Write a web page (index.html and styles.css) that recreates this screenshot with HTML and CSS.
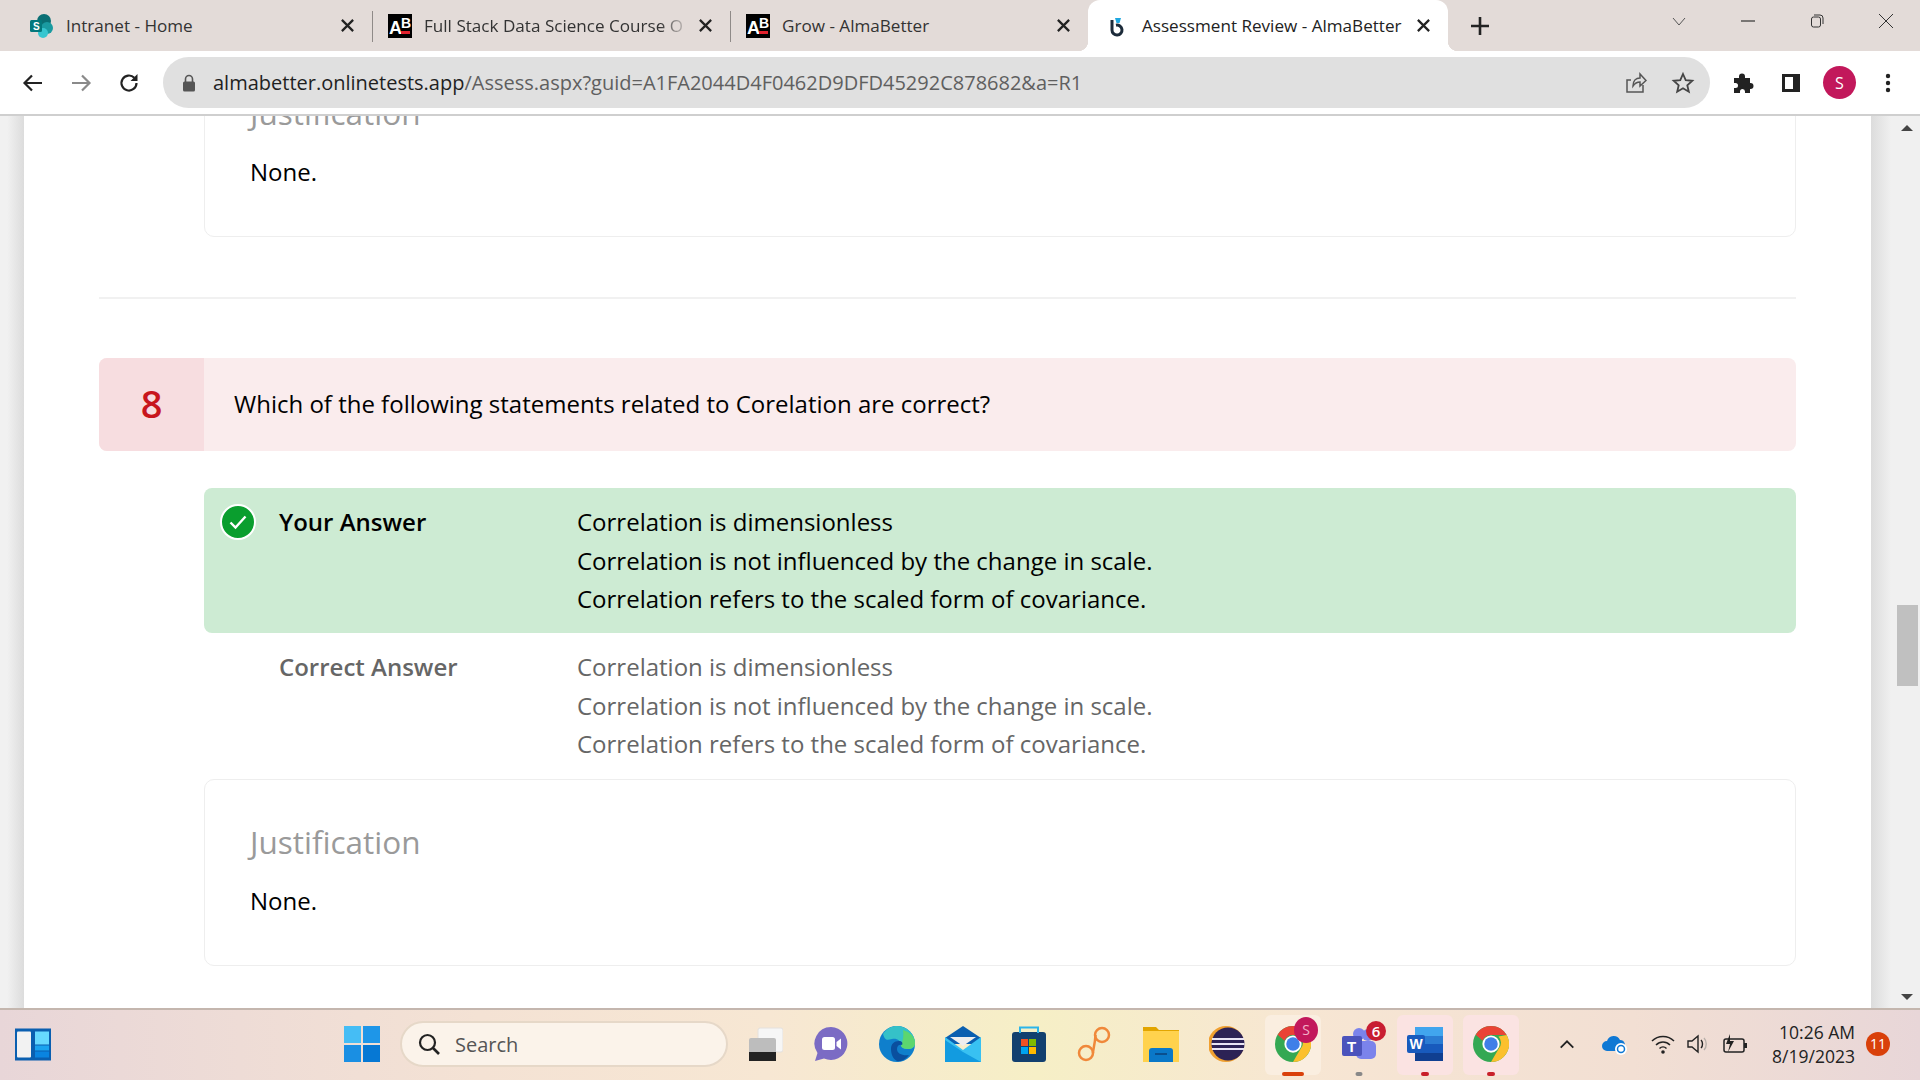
FILE: index.html
```html
<!DOCTYPE html>
<html lang="en">
<head>
    <meta charset="UTF-8">
    <meta name="viewport" content="width=device-width, initial-scale=1.0">
    <title>Assessment Review - AlmaBetter</title>
    <link rel="stylesheet" href="styles.css">
</head>
<body>
    <svg class="defs" width="0" height="0">
        <symbol id="tab-x" viewBox="0 0 16 16">
            <path d="M2 2l12 12M14 2L2 14" stroke="#222" stroke-width="2.400" fill="none"/>
        </symbol>
        <symbol id="chrome" viewBox="0 0 48 48">
            <circle cx="24" cy="24" r="24" fill="#34a853"/>
            <path d="M24 0a24 24 0 0 1 20.8 12H24a12 12 0 0 0-11.2 7.6L3.6 11.6A24 24 0 0 1 24 0z" fill="#ea4335"/>
            <path d="M44.8 12A24 24 0 0 1 24 48l10.4-18A12 12 0 0 0 34 14z" fill="#fbc02d"/>
            <circle cx="24" cy="24" r="11.5" fill="#fff"/>
            <circle cx="24" cy="24" r="9" fill="#3f7fe8"/>
        </symbol>
    </svg>

    <div class="tabstrip">
        <div class="tab">
            <svg class="tab-icon" viewBox="0 0 24 24">
                <circle cx="14" cy="7" r="7" fill="#0a6f74"/>
                <circle cx="17" cy="14" r="6" fill="#1a9ba1"/>
                <circle cx="13" cy="19" r="5" fill="#37c6d0"/>
                <rect x="0" y="6" width="12" height="12" rx="1.5" fill="#03787c"/>
                <text x="3" y="16" font-family="Liberation Sans" font-weight="700" font-size="10" fill="#fff">S</text>
            </svg>
            <span class="tab-title">Intranet - Home</span>
            <svg class="tab-close"><use href="#tab-x"/></svg>
        </div>
        <div class="tab sep">
            <svg class="tab-icon" viewBox="0 0 24 24">
                <rect width="24" height="24" fill="#000"/>
                <text x="1" y="20" font-family="Liberation Sans" font-weight="700" font-size="18" fill="#fff">A</text>
                <text x="13" y="14" font-family="Liberation Sans" font-weight="700" font-size="14" fill="#fff">B</text>
                <rect x="13" y="17" width="9" height="3" fill="#e2222e"/>
            </svg>
            <span class="tab-title fade">Full Stack Data Science Course O</span>
            <svg class="tab-close"><use href="#tab-x"/></svg>
        </div>
        <div class="tab sep">
            <svg class="tab-icon" viewBox="0 0 24 24">
                <rect width="24" height="24" fill="#000"/>
                <text x="1" y="20" font-family="Liberation Sans" font-weight="700" font-size="18" fill="#fff">A</text>
                <text x="13" y="14" font-family="Liberation Sans" font-weight="700" font-size="14" fill="#fff">B</text>
                <rect x="13" y="17" width="9" height="3" fill="#e2222e"/>
            </svg>
            <span class="tab-title">Grow - AlmaBetter</span>
            <svg class="tab-close"><use href="#tab-x"/></svg>
        </div>
        <div class="tab active">
            <svg class="tab-icon" viewBox="0 0 24 24">
                <path d="M8 6v10a5 5 0 1 0 4-4.800" fill="none" stroke="#1c2b3a" stroke-width="3"/>
                <path d="M11 4h6l-1.500 5h-3z" fill="#1ea7e0"/>
            </svg>
            <span class="tab-title">Assessment Review - AlmaBetter</span>
            <svg class="tab-close"><use href="#tab-x"/></svg>
        </div>
        <svg class="new-tab" viewBox="0 0 20 20"><path d="M10 1v18M1 10h18" stroke="#222" stroke-width="2.600"/></svg>
        <div class="win-controls">
            <svg class="win-btn" viewBox="0 0 16 16"><path d="M2 5l6 7 6-7" fill="none" stroke="#555" stroke-width="1"/></svg>
            <svg class="win-btn" viewBox="0 0 16 16"><path d="M1 8h14" stroke="#333" stroke-width="1.200"/></svg>
            <svg class="win-btn" viewBox="0 0 16 16"><rect x="2.500" y="4" width="9" height="10" rx="2" fill="none" stroke="#333"/><path d="M5 2h6a3 3 0 0 1 3 3v6" fill="none" stroke="#333"/></svg>
            <svg class="win-btn" viewBox="0 0 16 16"><path d="M1 1l14 14M15 1L1 15" stroke="#333" stroke-width="1"/></svg>
        </div>
    </div>

    <div class="toolbar">
        <svg class="nav-btn" viewBox="0 0 24 24"><path d="M21 12H4M11 4.500L3.500 12l7.500 7.500" fill="none" stroke="#222" stroke-width="2.200"/></svg>
        <svg class="nav-btn" viewBox="0 0 24 24"><path d="M3 12h17M13 4.500l7.500 7.500-7.500 7.500" fill="none" stroke="#8a8a8a" stroke-width="2.200"/></svg>
        <svg class="nav-btn" viewBox="0 0 24 24"><path d="M19.500 12a7.500 7.500 0 1 1-2.200-5.300" fill="none" stroke="#222" stroke-width="2.200"/><path d="M20.500 3v7h-7z" fill="#222"/></svg>
        <div class="omnibox">
            <svg class="lock" viewBox="0 0 14 18"><path d="M3.500 8V5a3.500 3.500 0 0 1 7 0v3" fill="none" stroke="#555" stroke-width="1.600"/><rect x="1" y="7.500" width="12" height="10" rx="1.500" fill="#555"/></svg>
            <span class="url"><span class="host">almabetter.onlinetests.app</span>/Assess.aspx?guid=A1FA2044D4F0462D9DFD45292C878682&amp;a=R1</span>
            <svg class="omni-icon" viewBox="0 0 24 24"><path d="M20 14v7H4V9h4M10 15c0-5 3-8 7-8V3l6 6.500L17 15v-4c-3 0-5 1-7 4z" fill="none" stroke="#555" stroke-width="1.500"/></svg>
            <svg class="omni-icon" viewBox="0 0 24 24"><path d="M12 3l2.700 6.100 6.600.7-5 4.400 1.500 6.500L12 17.300l-5.800 3.400 1.500-6.500-5-4.400 6.600-.7z" fill="none" stroke="#444" stroke-width="1.800"/></svg>
        </div>
        <svg class="tool-icon" viewBox="0 0 24 24"><path d="M3 7h5V5.500a3 3 0 0 1 6 0V7h5v5h.5a3 3 0 0 1 0 6H19v4h-5v-1.500a2.500 2.500 0 0 0-5 0V22H3v-5h1.500a2.500 2.500 0 0 0 0-5H3z" fill="#222"/></svg>
        <svg class="tool-icon" viewBox="0 0 24 24"><rect x="3" y="3" width="18" height="18" fill="#222"/><rect x="6" y="6" width="8" height="12" fill="#fff"/></svg>
        <div class="avatar">S</div>
        <svg class="tool-icon" viewBox="0 0 24 24"><circle cx="12" cy="5" r="2.200" fill="#222"/><circle cx="12" cy="12" r="2.200" fill="#222"/><circle cx="12" cy="19" r="2.200" fill="#222"/></svg>
    </div>

    <div class="viewport">
        <div class="gutter-left"></div>
        <main class="content">
            <div class="justification scrolled">
                <h3>Justification</h3>
                <p>None.</p>
            </div>
            <hr class="divider">

            <div class="question">
                <div class="q-num">8</div>
                <div class="q-text">Which of the following statements related to Corelation are correct?</div>
            </div>

            <div class="answer yours">
                <div class="answer-icon">
                    <svg viewBox="0 0 36 36" width="36" height="36">
                        <circle cx="18" cy="18" r="17" fill="#0a9e2e" stroke="#fff" stroke-width="2"/>
                        <path d="M10.500 18.500l5 5 10-11" fill="none" stroke="#fff" stroke-width="2.400"/>
                    </svg>
                </div>
                <div class="answer-label">Your Answer</div>
                <div class="answer-values">
                    <div>Correlation is dimensionless</div>
                    <div>Correlation is not influenced by the change in scale.</div>
                    <div>Correlation refers to the scaled form of covariance.</div>
                </div>
            </div>

            <div class="answer correct">
                <div class="answer-icon"></div>
                <div class="answer-label">Correct Answer</div>
                <div class="answer-values">
                    <div>Correlation is dimensionless</div>
                    <div>Correlation is not influenced by the change in scale.</div>
                    <div>Correlation refers to the scaled form of covariance.</div>
                </div>
            </div>

            <div class="justification">
                <h3>Justification</h3>
                <p>None.</p>
            </div>
        </main>
        <div class="scrollbar">
            <div class="arrow up"></div>
            <div class="thumb"></div>
            <div class="arrow down"></div>
        </div>
    </div>

    <div class="taskbar">
        <svg class="widgets" viewBox="0 0 36 32">
            <rect width="36" height="32" fill="#0a5fb0"/>
            <rect x="2" y="3" width="14" height="26" rx="1" fill="#f2f2f2"/>
            <rect x="20" y="3" width="14" height="13" fill="#66d9ff"/>
            <rect x="20" y="17" width="14" height="5" fill="#1aa3f0"/>
            <rect x="20" y="23" width="14" height="6" fill="#0a84e0"/>
        </svg>

        <div class="task-item start">
            <svg class="app" viewBox="0 0 36 36">
                <rect x="0" y="0" width="17" height="17" fill="#45bdf5"/>
                <rect x="19" y="0" width="17" height="17" fill="#1e96e8"/>
                <rect x="0" y="19" width="17" height="17" fill="#1a8fe3"/>
                <rect x="19" y="19" width="17" height="17" fill="#0678d4"/>
            </svg>
        </div>

        <div class="search">
            <svg class="search-icon" viewBox="0 0 24 24"><circle cx="10.500" cy="10.500" r="7.500" fill="none" stroke="#222" stroke-width="2.200"/><path d="M16 16l6 6" stroke="#222" stroke-width="2.600"/></svg>
            <span>Search</span>
        </div>

        <div class="task-item">
            <svg class="app" viewBox="0 0 36 36">
                <rect x="11" y="2" width="25" height="24" rx="2" fill="#f6f6f6" stroke="#e4e0dc"/>
                <rect x="2" y="12" width="27" height="23" rx="2" fill="#bdbdbd"/>
                <rect x="2" y="26" width="27" height="9" fill="#222"/>
            </svg>
        </div>
        <div class="task-item">
            <svg class="app" viewBox="0 0 36 36">
                <path d="M18 1a16.500 16.500 0 1 1-7 31.500L2 35l2.500-8A16.500 16.500 0 0 1 18 1z" fill="#7b6bc4"/>
                <rect x="9" y="11" width="13" height="13" rx="2.500" fill="#fff"/>
                <path d="M23.500 16l4.500-3.500v11L23.500 20z" fill="#fff"/>
            </svg>
        </div>
        <div class="task-item">
            <svg class="app" viewBox="0 0 36 36">
                <circle cx="18" cy="18" r="18" fill="#0f7fcc"/>
                <path d="M4 8C8 2 13 0 18 0c10 0 18 8 18 17 0 4-3 6-7 6-5 0-7-2-7-4 0-4-4-7-9-6s-7 2-9-5z" fill="#35c1c8"/>
                <path d="M24 4c7 2 12 7 12 13 0 4-3 6-7 6-4 0-6-1-7-3 2-6 3-11 2-16z" fill="#5cd66e"/>
                <path d="M12 23c0-5 3-8 8-8 3 0 4 2 3 4-2-1-5 0-5 4 0 5 6 7 12 6-3 4-8 7-12 6-4-2-6-7-6-12z" fill="#0a4f9e"/>
            </svg>
        </div>
        <div class="task-item">
            <svg class="app" viewBox="0 0 36 36">
                <path d="M0 12L18 0l18 12v6H0z" fill="#0a5fb0"/>
                <path d="M5 11h26l-13 9z" fill="#eee"/>
                <path d="M0 11l18 13 18-13v25H0z" fill="#38c1f2"/>
                <path d="M0 36V14l18 12 18 10z" fill="#129be0"/>
            </svg>
        </div>
        <div class="task-item">
            <svg class="app" viewBox="0 0 36 36">
                <rect x="1" y="6" width="34" height="30" rx="3" fill="#12406f"/>
                <path d="M9 7V1.500h18V7" fill="none" stroke="#2cb5ea" stroke-width="2"/>
                <rect x="10" y="13" width="7" height="7" fill="#f25022"/>
                <rect x="18" y="13" width="7" height="7" fill="#7fba00"/>
                <rect x="10" y="21" width="7" height="7" fill="#00a4ef"/>
                <rect x="18" y="21" width="7" height="7" fill="#ffb900"/>
            </svg>
        </div>
        <div class="task-item">
            <svg class="app" viewBox="0 0 36 36">
                <circle cx="25" cy="9" r="7" fill="none" stroke="#f0883a" stroke-width="2.500"/>
                <circle cx="9" cy="27" r="7" fill="none" stroke="#f0883a" stroke-width="2.500"/>
                <path d="M18.500 9C18 18 16 24 16 27" fill="none" stroke="#f0883a" stroke-width="2.500"/>
            </svg>
        </div>
        <div class="task-item">
            <svg class="app" viewBox="0 0 36 36">
                <path d="M0 1h13l3 3h20v32H0z" fill="#e2a500"/>
                <rect x="0" y="5" width="36" height="31" fill="#ffd24d"/>
                <path d="M6 36V25a3 3 0 0 1 3-3h18a3 3 0 0 1 3 3v11z" fill="#0a78c8"/>
                <rect x="12" y="27" width="12" height="2" fill="#0a4f8e"/>
            </svg>
        </div>
        <div class="task-item">
            <svg class="app" viewBox="0 0 36 36">
                <circle cx="17" cy="18" r="18" fill="#f0a030"/>
                <circle cx="19" cy="18" r="16.500" fill="#2c2255"/>
                <path d="M3 13h32M2.500 18h33M3 23h32" stroke="#e8e4f4" stroke-width="2"/>
            </svg>
        </div>
        <div class="task-item boxed light">
            <svg class="app"><use href="#chrome"/></svg>
            <div class="mini-badge">S</div>
            <div class="running long"></div>
        </div>
        <div class="task-item">
            <svg class="app" viewBox="0 0 36 36">
                <circle cx="27" cy="9" r="6" fill="#7b83eb"/>
                <rect x="15" y="15" width="20" height="18" rx="5" fill="#7b83eb"/>
                <circle cx="18" cy="8" r="6" fill="#7b83eb"/>
                <rect x="1" y="10" width="20" height="20" rx="2" fill="#4b53bc"/>
                <text x="6" y="26" font-family="Liberation Sans" font-weight="700" font-size="15" fill="#fff">T</text>
            </svg>
            <div class="count-badge">6</div>
            <div class="running idle"></div>
        </div>
        <div class="task-item boxed pink stacked">
            <svg class="app" viewBox="0 0 36 36">
                <rect x="8" y="1" width="28" height="34" rx="2" fill="#2b7cd3"/>
                <rect x="8" y="1" width="28" height="9" fill="#41a5ee"/>
                <rect x="8" y="18" width="28" height="9" fill="#185abd"/>
                <rect x="8" y="27" width="28" height="8" fill="#103f91"/>
                <rect x="0" y="9" width="18" height="18" rx="2" fill="#185abd"/>
                <text x="2.500" y="23" font-family="Liberation Sans" font-weight="700" font-size="14" fill="#fff">W</text>
            </svg>
            <div class="running"></div>
        </div>
        <div class="task-item boxed pink">
            <svg class="app"><use href="#chrome"/></svg>
            <div class="running"></div>
        </div>

        <div class="tray">
            <svg class="tray-icon chevron" viewBox="0 0 20 20"><path d="M3 14l7-7 7 7" fill="none" stroke="#222" stroke-width="2"/></svg>
            <svg class="tray-icon cloud" viewBox="0 0 26 22">
                <path d="M5 18a5 5 0 0 1 0-10 7 7 0 0 1 13-1 5 5 0 0 1 3 9l-3 2z" fill="#0f78d4"/>
                <circle cx="19" cy="16" r="6" fill="#fff"/>
                <circle cx="19" cy="16" r="3.500" fill="none" stroke="#0f78d4" stroke-width="1.500"/>
            </svg>
            <svg class="tray-icon wifi" viewBox="0 0 24 20"><path d="M1 7c6-6 16-6 22 0M5 11c4-4 10-4 14 0M8.500 14.500c2-2 5-2 7 0" fill="none" stroke="#222" stroke-width="1.500"/><circle cx="12" cy="18" r="1.800" fill="#222"/></svg>
            <svg class="tray-icon speaker" viewBox="0 0 24 20"><path d="M2 7h4l6-5v16l-6-5H2z" fill="none" stroke="#222" stroke-width="1.400"/><path d="M15 6c2 2 2 6 0 8" fill="none" stroke="#222" stroke-width="1.400"/><path d="M18 4c3 3 3 9 0 12" fill="none" stroke="#b8b0aa" stroke-width="1.400"/></svg>
            <svg class="tray-icon battery" viewBox="0 0 26 22"><rect x="2" y="6" width="20" height="13" rx="2" fill="none" stroke="#222" stroke-width="1.500"/><rect x="22" y="10" width="3" height="5" fill="#222"/><path d="M8 1L4 11h4l-2 8 6-11H8z" fill="#222"/></svg>
            <div class="clock">
                <div>10:26 AM</div>
                <div>8/19/2023</div>
            </div>
            <div class="notif">11</div>
        </div>
    </div>
</body>
</html>
```

FILE: styles.css
```css
* {
    box-sizing: border-box;
}

html, body {
    margin: 0;
    padding: 0;
    height: 100%;
    overflow: hidden;
}

body {
    font-family: 'Open Sans', 'Noto Sans', sans-serif;
    background: #fff;
    display: flex;
    flex-direction: column;
}

.defs {
    position: absolute;
}

/* browser tabs */
.tabstrip {
    height: 51px;
    background: #e3dbd8;
    display: flex;
    padding-left: 14px;
    color: #333;
    font-size: 17.100px;
}

.tab {
    width: 358px;
    height: 51px;
    display: flex;
    align-items: center;
    padding: 0 17px 0 16px;
    position: relative;
    flex-shrink: 0;
}

.tab.sep:before {
    content: "";
    position: absolute;
    left: 0;
    top: 11px;
    height: 31px;
    width: 1px;
    background: #8f8a88;
}

.tab.active {
    width: 360px;
    background: #fff;
    border-radius: 12px 12px 0 0;
    color: #222;
}

/* little flares where the active tab meets the toolbar */
.tab.active:before,
.tab.active:after {
    content: "";
    position: absolute;
    bottom: 0;
    width: 10px;
    height: 10px;
}

.tab.active:before {
    left: -10px;
    background: radial-gradient(circle at 0 0, transparent 10px, #fff 10.500px);
}

.tab.active:after {
    right: -10px;
    background: radial-gradient(circle at 100% 0, transparent 10px, #fff 10.500px);
}

.tab-icon {
    width: 24px;
    height: 24px;
    margin-right: 12px;
    flex-shrink: 0;
}

.tab.active .tab-icon {
    margin-right: 14px;
}

.tab-title {
    flex: 1;
    white-space: nowrap;
}

.tab-title.fade {
    -webkit-mask-image: linear-gradient(90deg, #000 86%, transparent 97%);
    mask-image: linear-gradient(90deg, #000 86%, transparent 97%);
}

.tab-close {
    width: 15px;
    height: 15px;
    flex-shrink: 0;
}

.new-tab {
    width: 20px;
    height: 20px;
    margin: 16px 0 0 22px;
    flex-shrink: 0;
}

.win-controls {
    display: flex;
    margin-left: auto;
    height: 51px;
    align-items: flex-start;
    padding: 13px 26px 0 0;
    gap: 53px;
}

.win-btn {
    width: 16px;
    height: 16px;
}

/* address bar */
.toolbar {
    height: 65px;
    display: flex;
    align-items: center;
    padding: 0 0 0 21px;
    background: #fff;
    border-bottom: 2px solid #cfcfcf;
}

.nav-btn {
    width: 24px;
    height: 24px;
    margin-right: 24px;
    flex-shrink: 0;
}

.omnibox {
    width: 1547px;
    height: 51px;
    flex-shrink: 0;
    margin-left: -2px;
    background: #e0e0e0;
    border-radius: 26px;
    display: flex;
    align-items: center;
    padding-left: 19px;
    padding-right: 15px;
    margin-right: 21px;
}

.lock {
    width: 14px;
    height: 18px;
    margin-right: 17px;
}

.url {
    font-size: 20px;
    color: #5f5f5f;
    flex: 1;
    white-space: nowrap;
}

.host {
    color: #1f1f1f;
}

.omni-icon {
    width: 24px;
    height: 24px;
    margin-left: 24px;
}

.tool-icon {
    width: 24px;
    height: 24px;
    margin-right: 24px;
    flex-shrink: 0;
}

.avatar {
    width: 33px;
    height: 33px;
    border-radius: 50%;
    background: #c2185b;
    color: #fff;
    font-size: 16px;
    display: flex;
    align-items: center;
    justify-content: center;
    margin-left: -4px;
    margin-right: 20px;
    flex-shrink: 0;
}

/* page */
.viewport {
    height: 892px;
    display: flex;
    overflow: hidden;
}

.gutter-left {
    width: 24px;
    flex-shrink: 0;
    background: linear-gradient(90deg, #f1f1f1 30%, #dcdcdc);
}

.content {
    width: 1847px;
    padding: 0 75px;
}

.justification {
    margin-left: 105px;
    height: 187px;
    border: 1px solid #eee;
    border-radius: 10px;
    padding: 42px 0 0 45px;
}

.justification.scrolled {
    margin-top: -66px;
}

.justification h3 {
    margin: 0;
    font-size: 31.500px;
    font-weight: 400;
    line-height: 40px;
    color: #9a9a9a;
}

.justification p {
    margin: 20px 0 0;
    font-size: 24px;
    line-height: 38px;
    color: #000;
}

.divider {
    border: none;
    border-top: 2px solid #f1f1f1;
    margin: 60px 0 59px;
}

.question {
    height: 93px;
    display: flex;
    align-items: center;
    background: #faeced;
    border-radius: 8px;
    overflow: hidden;
    font-size: 24px;
    color: #000;
}

.q-num {
    width: 105px;
    height: 100%;
    background: #f7dde0;
    color: #c8161d;
    font-size: 38px;
    font-weight: 600;
    display: flex;
    align-items: center;
    justify-content: center;
    padding-bottom: 3px;
}

.q-text {
    padding: 0 0 2px 30px;
}

.answer {
    margin-left: 105px;
    display: grid;
    grid-template-columns: 75px 298px 1fr;
    font-size: 24px;
    line-height: 38.5px;
    padding: 15px 0 14.500px;
}

.answer.yours {
    margin-top: 37px;
    background: #cdebd3;
    border-radius: 8px;
    color: #000;
}

.answer.correct {
    color: #666;
    height: 146px;
}

.answer-icon {
    padding: 1px 0 0 16px;
}

.answer-icon svg {
    display: block;
}

.answer-label {
    font-weight: 600;
}

/* scrollbar */
.scrollbar {
    flex: 1;
    display: flex;
    flex-direction: column;
    align-items: center;
    padding: 9px 0 8px 23px;
    background: linear-gradient(90deg, #dcdcdc, #f0f0f0 20px);
}

.arrow {
    width: 0;
    height: 0;
    border-left: 6px solid transparent;
    border-right: 6px solid transparent;
}

.arrow.up {
    border-bottom: 6px solid #444;
}

.arrow.down {
    border-top: 6px solid #444;
    margin-top: auto;
}

.thumb {
    width: 21px;
    height: 81px;
    background: #c0c0c0;
    margin-top: 474px;
}

/* windows taskbar */
.taskbar {
    height: 72px;
    flex: 1;
    display: flex;
    align-items: center;
    padding-bottom: 2px;
    border-top: 2px solid #c4b6ae;
    background: linear-gradient(90deg, #e8d6d8 0%, #f4e2d4 25%, #f7e7d3 40%, #f6efc6 54%, #f7e6d3 68%, #f2dfd3 85%, #e8d6d8 100%);
}

.widgets {
    width: 36px;
    height: 33px;
    margin-left: 15px;
    flex-shrink: 0;
}

.task-item {
    width: 66px;
    height: 68px;
    display: flex;
    align-items: center;
    justify-content: center;
    position: relative;
    flex-shrink: 0;
}

.task-item.start {
    margin-left: 278px;
}

.app {
    width: 36px;
    height: 36px;
}

.task-item.boxed:before {
    content: "";
    position: absolute;
    left: 5px;
    right: 5px;
    top: 5px;
    bottom: 3px;
    border-radius: 6px;
    z-index: 0;
}

.task-item.light:before {
    background: #faeee0;
}

.task-item.pink:before {
    background: #fbe3e2;
}

.task-item .app {
    position: relative;
}

.running {
    position: absolute;
    left: 50%;
    transform: translateX(-50%);
    bottom: 2px;
    width: 8px;
    height: 4px;
    border-radius: 2px;
    background: #c8202a;
}

.running.long {
    width: 22px;
    background: #d9400a;
}

.running.idle {
    width: 7px;
    background: #888;
}

.mini-badge {
    position: absolute;
    top: 7px;
    right: 8px;
    width: 24px;
    height: 26px;
    border-radius: 50%;
    background: #c2185b;
    color: #f2b0c8;
    font-size: 14px;
    line-height: 26px;
    text-align: center;
}

.count-badge {
    position: absolute;
    top: 11px;
    right: 6px;
    width: 20px;
    height: 20px;
    border-radius: 50%;
    background: #c81e32;
    color: #fff;
    font-size: 15px;
    font-weight: 600;
    line-height: 20px;
    text-align: center;
}

.search {
    width: 328px;
    height: 46px;
    margin-left: 5px;
    margin-right: 4px;
    border-radius: 23px;
    background: #fbf3ea;
    border: 2px solid #e6d8c8;
    display: flex;
    align-items: center;
    padding-left: 15px;
    font-size: 20px;
    color: #555;
    flex-shrink: 0;
}

.search-icon {
    width: 24px;
    height: 24px;
    margin-right: 14px;
}

/* system tray */
.tray {
    display: flex;
    align-items: center;
    flex: 1;
}

.tray-icon {
    flex-shrink: 0;
}

.chevron {
    width: 18px;
    height: 18px;
    margin-left: 34px;
}

.cloud {
    width: 26px;
    height: 22px;
    margin-left: 26px;
}

.wifi {
    width: 24px;
    height: 20px;
    margin-left: 23px;
}

.speaker {
    width: 24px;
    height: 20px;
    margin-left: 11px;
}

.battery {
    width: 26px;
    height: 22px;
    margin-left: 12px;
}

.clock {
    margin-left: auto;
    text-align: right;
    font-size: 17.500px;
    line-height: 24px;
    color: #222;
}

.notif {
    width: 24px;
    height: 24px;
    margin: 0 30px 0 11px;
    border-radius: 50%;
    background: #d9400a;
    color: #fff;
    font-size: 14px;
    line-height: 24px;
    text-align: center;
    flex-shrink: 0;
}
```
